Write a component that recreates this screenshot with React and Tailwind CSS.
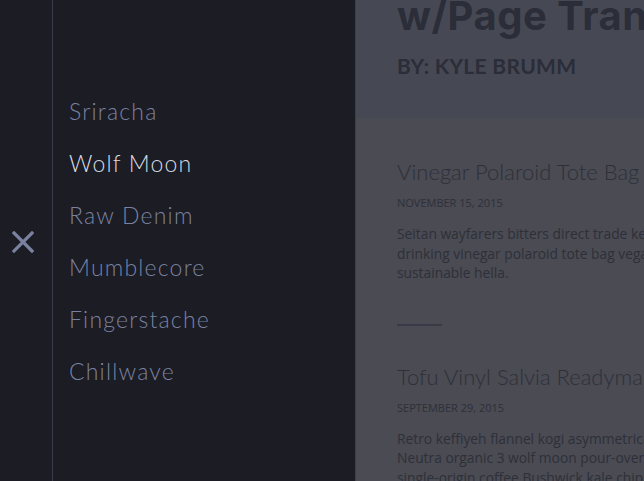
export default function App() {
  const items = ["Sriracha", "Wolf Moon", "Raw Denim", "Mumblecore", "Fingerstache", "Chillwave"];
  const posts = [
    {
      title: "Vinegar Polaroid Tote Bag Helvetica",
      date: "NOVEMBER 15, 2015",
      body: [
        "Seitan wayfarers bitters direct trade keffiyeh, pour-over",
        "drinking vinegar polaroid tote bag vegan kogi artisan",
        "sustainable hella.",
      ],
    },
    {
      title: "Tofu Vinyl Salvia Readymade Chambray",
      date: "SEPTEMBER 29, 2015",
      body: [
        "Retro keffiyeh flannel kogi asymmetrical fingerstache",
        "Neutra organic 3 wolf moon pour-over fixie semiotics",
        "single-origin coffee Bushwick kale chips tattooed.",
      ],
    },
  ];
  return (
    <div className="flex h-[481px] w-[644px] overflow-hidden bg-[#1b1c24]">
      <aside className="flex h-full w-[53px] shrink-0 items-center border-r border-[#393c4a] bg-[#1b1c24] pl-[12px]">
        <svg width="22" height="22" viewBox="0 0 22 22" className="mt-[2px]">
          <path d="M2 2 L20 20 M20 2 L2 20" stroke="#7a82a0" strokeWidth="3.2" strokeLinecap="square" fill="none" />
        </svg>
      </aside>
      <nav className="h-full w-[302px] shrink-0 bg-[#1b1c24] pl-[16px] pt-[85px] font-['Lato',sans-serif]">
        <ul>
          {items.map((it) => (
            <li
              key={it}
              className={`h-[52px] text-[23px] font-light leading-[52px] tracking-[1.2px] ${it === "Wolf Moon" ? "text-[#d8dae2]" : "text-[#7a82a0]"}`}
            >
              {it}
            </li>
          ))}
        </ul>
      </nav>
      <main className="h-full flex-1 overflow-hidden border-l border-[#3d3f49] bg-[#4a4b53] whitespace-nowrap">
        <header className="h-[118px] overflow-hidden bg-[#464954] pl-[41px] text-[#2b2d38]">
          <h1 className="-mt-[8px] font-['Inter',sans-serif] text-[40px] font-bold leading-[48px] tracking-[0.5px]">w/Page Transition</h1>
          <p className="mt-[11px] font-['Lato',sans-serif] text-[21px] font-bold leading-[30px] tracking-[0.3px]">BY: KYLE BRUMM</p>
        </header>
        <section className="pl-[41px] pt-[40px]">
          {posts.map((p, i) => (
            <article key={i}>
              {i > 0 && <div className="mb-[37px] mt-[41px] h-[2px] w-[45px] bg-[#383a48]" />}
              <h2 className="font-['Lato',sans-serif] text-[22px] font-light leading-[28px] text-[#2e3039]">{p.title}</h2>
              <div className="mt-[9px] font-['Open_Sans',sans-serif] text-[11px] leading-[16px] text-[#2e3039]">{p.date}</div>
              <div className="mt-[13px] font-['Open_Sans',sans-serif] text-[13.8px] leading-[19.6px] text-[#2e3039]">
                {p.body.map((l) => (
                  <div key={l}>{l}</div>
                ))}
              </div>
            </article>
          ))}
        </section>
      </main>
    </div>
  );
}
